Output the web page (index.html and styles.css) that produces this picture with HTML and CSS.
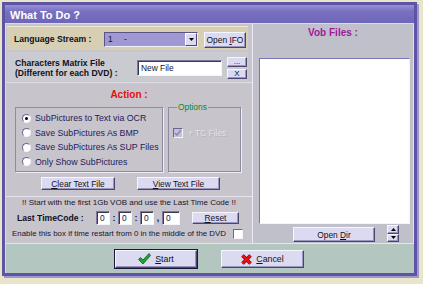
FILE: index.html
```html
<!DOCTYPE html>
<html lang="en">
<head>
    <meta charset="UTF-8">
    <title>What To Do ?</title>
    <link rel="stylesheet" href="styles.css">
</head>
<body>
    <div class="window">
        <div class="title">What To Do ?</div>
        <div class="client">
            <div class="main">
                <div class="left">
                    <!-- Language stream -->
                    <div class="lang-row">
                        <span class="label-b lang-label">Language Stream :</span>
                        <div class="select">
                            <span class="sel-text">1</span>
                            <span class="sel-dash">-</span>
                            <span class="sel-btn">
                                <svg width="5" height="3" viewBox="0 0 5 3"><path d="M0 0H5L2.5 3Z" fill="#000"/></svg>
                            </span>
                        </div>
                        <div class="btn btn-ifo"><span>Open <u>I</u>FO</span></div>
                    </div>

                    <!-- Matrix file -->
                    <div class="matrix-row">
                        <div class="matrix-label">Characters Matrix File<br>(Different for each DVD) :</div>
                        <div class="input input-file">New File</div>
                        <div class="small-btns">
                            <div class="btn btn-small"><span>...</span></div>
                            <div class="btn btn-small"><span>X</span></div>
                        </div>
                    </div>

                    <!-- Action -->
                    <div class="action">
                        <div class="action-title">Action :</div>
                        <div class="frames">
                            <div class="frame radios">
                                <div class="radio-item"><span class="radio checked"></span>SubPictures to Text via OCR</div>
                                <div class="radio-item"><span class="radio"></span>Save SubPictures As BMP</div>
                                <div class="radio-item"><span class="radio"></span>Save SubPictures As SUP Files</div>
                                <div class="radio-item"><span class="radio"></span>Only Show SubPictures</div>
                            </div>
                            <fieldset class="frame options">
                                <legend>Options</legend>
                                <div class="opt-item">
                                    <span class="check disabled">
                                        <svg width="8" height="8" viewBox="0 0 8 8"><path d="M1 4L3 6L7 1" fill="none" stroke="#8e8aa8" stroke-width="1.6"/></svg>
                                    </span>
                                    <span class="opt-label">+ TC Files</span>
                                </div>
                            </fieldset>
                        </div>
                        <div class="text-btns">
                            <div class="btn btn-clear"><span><u>C</u>lear Text File</span></div>
                            <div class="btn btn-view"><span><u>V</u>iew Text File</span></div>
                        </div>
                    </div>

                    <!-- Time code -->
                    <div class="timecode">
                        <div class="notice">!! Start with the first 1Gb VOB and use the Last Time Code !!</div>
                        <div class="tc-row">
                            <span class="label-b tc-label">Last TimeCode :</span>
                            <div class="input tc-input">0</div>
                            <span class="tc-sep">:</span>
                            <div class="input tc-input">0</div>
                            <span class="tc-sep">:</span>
                            <div class="input tc-input">0</div>
                            <span class="tc-sep">,</span>
                            <div class="input tc-input tc-wide">0</div>
                            <div class="btn btn-reset"><span><u>R</u>eset</span></div>
                        </div>
                        <div class="enable-row">
                            <span class="enable-text">Enable this box if time restart from 0 in the middle of the DVD</span>
                            <span class="check"></span>
                        </div>
                    </div>
                </div>

                <div class="right">
                    <div class="vob-title">Vob Files :</div>
                    <div class="vob-list"></div>
                    <div class="vob-foot">
                        <div class="btn btn-dir"><span>Open <u>D</u>ir</span></div>
                        <div class="spin">
                            <div class="btn spin-btn">
                                <svg width="5" height="3" viewBox="0 0 5 3"><path d="M0 3H5L2.5 0Z" fill="#000"/></svg>
                            </div>
                            <div class="btn spin-btn">
                                <svg width="5" height="3" viewBox="0 0 5 3"><path d="M0 0H5L2.5 3Z" fill="#000"/></svg>
                            </div>
                        </div>
                    </div>
                </div>
            </div>

            <div class="bottom">
                <div class="btn btn-big btn-default">
                    <svg width="13" height="12" viewBox="0 0 13 12">
                        <path d="M0.5 6.5L2.5 4.5L5 7L11 0.5L12.5 2.5L5 11Z" fill="#1ca82c" stroke="#0c5a14" stroke-width="0.8"/>
                    </svg>
                    <span><u>S</u>tart</span>
                </div>
                <div class="btn btn-big">
                    <svg width="11" height="11" viewBox="0 0 11 11">
                        <path d="M1.5 1.5L9.5 9.5M9.5 1.5L1.5 9.5" stroke="#7a0a0a" stroke-width="3.6"/>
                        <path d="M1.5 1.5L9.5 9.5M9.5 1.5L1.5 9.5" stroke="#e21414" stroke-width="2.4"/>
                    </svg>
                    <span><u>C</u>ancel</span>
                </div>
            </div>
        </div>
    </div>
</body>
</html>
```

FILE: styles.css
```css
:root {
    --frame: #5e54a6;
    --btn-face: #dcdaf0;
    --btn-dark: #4a4670;
    --text: #141430;
}

* {
    margin: 0;
    padding: 0;
    box-sizing: border-box;
}

body {
    width: 423px;
    height: 284px;
    overflow: hidden;
    padding: 2px 0 0 2px;
    background: #e9e5cb;
    font-family: 'Liberation Sans', Arial, sans-serif;
    font-size: 8px;
    color: var(--text);
}

.window {
    width: 415px;
    height: 274px;
    border: 3px solid var(--frame);
    box-shadow: 2px 2px 0 #a098cc;
    display: flex;
    flex-direction: column;
    background: #c6c2cc;
}

.title {
    height: 18px;
    padding: 3px 0 0 5px;
    line-height: 15px;
    font-size: 11px;
    font-weight: bold;
    color: #fff;
    background: linear-gradient(to bottom, #9890d6 0%, #7a70c2 35%, #6e66b8 100%);
}

.client {
    flex: 1;
    display: flex;
    flex-direction: column;
    border-top: 1px solid #dcd8ee;
    border-left: 1px solid #dcd8ee;
}

.main {
    display: flex;
    height: 219px;
}

.left {
    width: 246px;
    display: flex;
    flex-direction: column;
    background: #c8c4cc;
}

.label-b {
    font-size: 8.6px;
    font-weight: bold;
    color: #101020;
}

/* buttons */
.btn {
    display: flex;
    align-items: center;
    justify-content: center;
    background: var(--btn-face);
    border: 1px solid;
    border-color: #f6f6ff var(--btn-dark) var(--btn-dark) #f6f6ff;
    box-shadow: inset -1px -1px #9894c0;
    font-size: 8.4px;
    color: #101020;
    white-space: nowrap;
}

.input {
    background: #fff;
    border: 1px solid;
    border-color: #7c78a0 #f4f4fa #f4f4fa #7c78a0;
    box-shadow: inset 1px 1px #3a3850;
    font-size: 8.4px;
    padding-left: 3px;
    display: flex;
    align-items: center;
}

/* language row */
.lang-row {
    height: 24px;
    margin: 2px 4px 2px 1px;
    padding: 1px 0 0 7px;
    display: flex;
    align-items: center;
    background: #d6cfb3;
    border-top: 1px solid #ece6d2;
}

.lang-label {
    width: 90px;
}

.select {
    width: 94px;
    height: 15px;
    display: flex;
    align-items: center;
    background: #a098d2;
    border: 1px solid;
    border-color: #5a5486 #f0f0f8 #f0f0f8 #5a5486;
    font-size: 8.4px;
}

.sel-text {
    margin-left: 3px;
    width: 16px;
}

.sel-dash {
    flex: 1;
}

.sel-btn {
    width: 12px;
    height: 13px;
    display: flex;
    align-items: center;
    justify-content: center;
    background: var(--btn-face);
    border: 1px solid;
    border-color: #fff var(--btn-dark) var(--btn-dark) #fff;
}

.btn-ifo {
    width: 42px;
    height: 16px;
    margin-left: 6px;
    margin-top: 2px;
}

/* matrix row */
.matrix-row {
    height: 29px;
    margin: 0 4px 1px 1px;
    padding: 3px 0 0 8px;
    display: flex;
    align-items: center;
    background: #c9cbd0;
}

.matrix-label {
    width: 122px;
    font-size: 8.6px;
    font-weight: bold;
    line-height: 10px;
    color: #101020;
}

.input-file {
    width: 85px;
    height: 16px;
}

.small-btns {
    margin-left: 5px;
    display: flex;
    flex-direction: column;
    gap: 2px;
}

.btn-small {
    width: 20px;
    height: 10px;
    font-size: 8px;
    line-height: 8px;
    overflow: visible;
}

/* action block */
.action {
    height: 114px;
    border-top: 1px solid #e2dee8;
}

.action-title {
    height: 12px;
    margin-top: 6px;
    text-align: center;
    font-size: 10px;
    font-weight: bold;
    line-height: 12px;
    color: #e21010;
}

.frames {
    display: flex;
    align-items: flex-end;
    gap: 5px;
    padding-left: 9px;
    height: 70px;
    margin-top: 1px;
}

.frame {
    border: 1px solid #8e8aa2;
    box-shadow: 1px 1px 0 #eeecf6;
}

.radios {
    width: 148px;
    height: 65px;
    padding: 3px 0 0 6px;
}

.radio-item {
    height: 14.5px;
    display: flex;
    align-items: center;
    gap: 4px;
    font-size: 8.8px;
    color: #1c1c5c;
}

.radio {
    width: 9px;
    height: 9px;
    border-radius: 50%;
    background: #fff;
    border: 1px solid;
    border-color: #6a6690 #f4f4fa #f4f4fa #6a6690;
    display: flex;
    align-items: center;
    justify-content: center;
}

.radio.checked::after {
    content: '';
    width: 3px;
    height: 3px;
    border-radius: 50%;
    background: #000;
}

.options {
    width: 73px;
    height: 70px;
    padding: 16px 0 0 4px;
}

.options legend {
    margin-left: 4px;
    padding: 0 1px;
    font-size: 8.4px;
    line-height: 10px;
    color: #0a8a18;
}

.opt-item {
    display: flex;
    align-items: center;
    gap: 5px;
}

.check {
    width: 10px;
    height: 10px;
    background: #fff;
    border: 1px solid;
    border-color: #6a6690 #f4f4fa #f4f4fa #6a6690;
    display: flex;
    align-items: center;
    justify-content: center;
    flex-shrink: 0;
}

.check.disabled {
    background: #c4c0da;
}

.opt-label {
    color: #e2e2ec;
    font-size: 8.4px;
    text-shadow: 1px 1px 0 #b4b0c0;
}

.text-btns {
    display: flex;
    gap: 22px;
    padding-left: 35px;
    margin-top: 5px;
}

.btn-clear {
    width: 74px;
    height: 13px;
}

.btn-view {
    width: 83px;
    height: 13px;
}

/* time code */
.timecode {
    flex: 1;
    border-top: 1px solid #e6e2ee;
}

.notice {
    margin-top: 1px;
    height: 10px;
    line-height: 10px;
    text-align: center;
    font-size: 8px;
    white-space: nowrap;
}

.tc-row {
    height: 14px;
    margin-top: 3px;
    padding-left: 11px;
    display: flex;
    align-items: center;
}

.tc-label {
    width: 79px;
}

.tc-input {
    width: 14px;
    height: 14px;
}

.tc-wide {
    width: 18px;
}

.tc-sep {
    width: 8px;
    text-align: center;
    font-size: 9px;
    font-weight: bold;
}

.tc-sep:first-of-type {
    width: 9px;
}

.btn-reset {
    width: 47px;
    height: 12px;
    margin-left: 12px;
}

.enable-row {
    height: 11px;
    margin-top: 3px;
    padding: 0 9px 0 6px;
    display: flex;
    align-items: center;
    justify-content: space-between;
}

.enable-text {
    font-size: 7.9px;
    white-space: nowrap;
}

/* vob files */
.right {
    flex: 1;
    display: flex;
    flex-direction: column;
    background: #c0c0ca;
    border-left: 1px solid #eceaf4;
    border-right: 1px solid #e0def0;
}

.vob-title {
    margin-top: 3px;
    height: 12px;
    line-height: 12px;
    text-align: center;
    font-size: 10px;
    font-weight: bold;
    color: #a0189c;
}

.vob-list {
    width: 151px;
    height: 166px;
    margin: 19px 0 0 6px;
    background: #fff;
    border: 1px solid;
    border-color: #7c74b8 #f4f4fa #f4f4fa #7c74b8;
}

.vob-foot {
    display: flex;
    align-items: flex-start;
    padding-left: 40px;
}

.btn-dir {
    width: 82px;
    height: 15px;
    margin-top: 3px;
}

.spin {
    margin: 1px 0 0 12px;
    display: flex;
    flex-direction: column;
}

.spin-btn {
    width: 12px;
    height: 8.5px;
}

/* bottom bar */
.bottom {
    height: 30px;
    display: flex;
    gap: 24px;
    padding: 6px 0 0 109px;
    background: #b4c6c0;
    border-top: 1px solid #e0e8e6;
}

.btn-big {
    width: 83px;
    height: 18px;
    gap: 4px;
    font-size: 8.8px;
}

.btn-default {
    width: 82px;
    outline: 1px solid #1a1838;
    outline-offset: 0;
}
```
